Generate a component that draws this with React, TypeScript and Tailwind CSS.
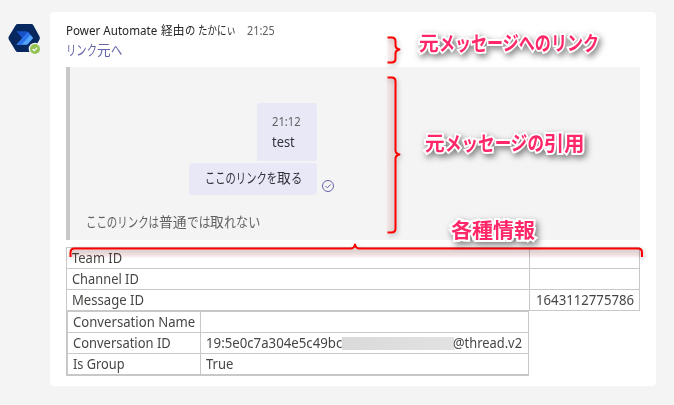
import { useLayoutEffect, useRef, useState } from "react";

const base = "font-['Noto_Sans','Noto_Sans_CJK_JP',sans-serif]";

/** One line of text condensed horizontally to an exact width. */
function Fit({ w, children, className = "" }: { w: number; children: string; className?: string }) {
  const ref = useRef<HTMLSpanElement>(null);
  const [scale, setScale] = useState(1);
  useLayoutEffect(() => {
    if (ref.current) setScale(w / ref.current.offsetWidth);
  }, [w]);
  return (
    <span className={`block shrink-0 whitespace-nowrap ${className}`} style={{ width: w }}>
      <span ref={ref} className="inline-block origin-left" style={{ transform: `scaleX(${scale})` }}>
        {children}
      </span>
    </span>
  );
}

/** Japanese line made of runs: full-width kanji and narrower kana. */
function Runs({ runs, className = "" }: { runs: [string, number][]; className?: string }) {
  return (
    <div className={`flex ${className}`}>
      {runs.map(([text, w], i) => (
        <Fit key={i} w={w}>{text}</Fit>
      ))}
    </div>
  );
}

function Avatar() {
  return (
    <svg className="h-8 w-9 shrink-0" viewBox="0 0 36 32">
      <path d="M9.6 2h13.8q1.2 0 1.800 1l6.300 11.500q.8 1.500 0 3L25.200 29q-.6 1-1.800 1H9.600q-1.200 0-1.800-1L.8 17.500q-.8-1.500 0-3L7.800 3q.6-1 1.800-1z" fill="#06285f" />
      <path d="M8.500 9.300h9.700q1 0 1.700.8l5.200 5.900H14z" fill="#1850c8" />
      <path d="M14 16 8.500 22.500h5L19 16z" fill="#123f9f" />
      <path d="M20 10.200 25.200 16 20 22q-.6.700-1.400.700H8.600z" fill="#55a5fb" />
      <path d="M20 10.200 22.400 12.900 13.600 22.700h-5z" fill="#2b73ea" />
      <circle cx="27" cy="27" r="6.300" fill="#f4f4f4" />
      <circle cx="27" cy="27" r="5" fill="#92c353" />
      <path d="m24.700 27 1.600 1.600 3-3" fill="none" stroke="#fff" strokeWidth="1.200" />
    </svg>
  );
}

function Brace({ d, shade }: { d: string; shade: string }) {
  return (
    <g>
      <path d={shade} fill="#a00000" opacity=".09" filter="url(#edge)" />
      <path d={d} fill="none" stroke="#000" strokeWidth="3" opacity=".2" filter="url(#soft)" transform="translate(1 2)" />
      <path d={d} fill="none" stroke="#f00" strokeWidth="2" strokeLinejoin="round" />
    </g>
  );
}

function Note({ runs, className }: { runs: [string, number][]; className: string }) {
  return (
    <Runs
      runs={runs}
      className={`absolute text-[20px] leading-6 font-bold text-[#ff2768] [paint-order:stroke_fill] [-webkit-text-stroke:4px_white] drop-shadow-[2px_3px_3px_rgba(0,0,0,0.5)] ${className}`}
    />
  );
}

const ids: [string, number, string][] = [
  ["Team ID", 50, ""],
  ["Channel ID", 67, ""],
  ["Message ID", 72, "1643112775786"],
];

export default function App() {
  return (
    <div className={`relative flex h-[405px] w-[674px] overflow-hidden bg-[#f4f4f4] pt-3 pl-2 text-[#484644] ${base}`}>
      <div className="w-[42px] shrink-0 pt-2.5">
        <Avatar />
      </div>
      <main className="h-[374px] w-[606px] rounded bg-white px-4 pt-2.5">
        <div className="flex h-[18px] text-[12px] leading-[18px]">
          <Fit w={91} className="text-[#252423]">Power Automate</Fit>
          <Runs runs={[["経由", 23.6], ["の", 10.4]]} className="ml-1 text-[#252423]" />
          <Fit w={38} className="ml-[3px] text-[#252423]">たかにぃ</Fit>
          <Fit w={28} className="ml-[11px] text-[#616161]">21:25</Fit>
        </div>
        <Runs
          runs={[["リンク", 31], ["元", 13.7], ["へ", 11.3]]}
          className="h-[27px] text-[14px] leading-5 text-[#6264a7]"
        />

        <blockquote className="h-[173px] border-l-4 border-[#c8c8c8] bg-[#f4f4f4] pt-9 pl-4">
          <div className="flex h-[92px] w-[264px] items-end">
            <div className="ml-[103px] flex w-32 shrink-0 flex-col items-end gap-[2px]">
              <div className="h-[58px] w-[60px] rounded-t-[3px] bg-[#e9e8f6] pt-[9px] pl-[15px]">
                <Fit w={29} className="text-[12px] leading-5 text-[#616161]">21:12</Fit>
                <Fit w={23} className="text-[14px] leading-5 text-[#33323a]">test</Fit>
              </div>
              <div className="h-8 w-32 rounded-[3px] bg-[#e9e8f6] pt-[5px] pl-4">
                <Runs
                  runs={[["ここのリンクを", 72], ["取", 13.7], ["る", 11.3]]}
                  className="text-[14px] leading-5 text-[#33323a]"
                />
              </div>
            </div>
            <svg className="mb-0.5 ml-1 size-3.5 shrink-0" viewBox="0 0 14 14" fill="none" stroke="#6264a7">
              <circle cx="7" cy="7" r="5.500" />
              <path d="m4.500 7 1.800 1.800L9.700 5.500" />
            </svg>
          </div>
          <Runs
            runs={[["ここのリンクは", 73], ["普通", 27.6], ["では", 23.4], ["取", 13.7], ["れない", 36.3]]}
            className="mt-[17px] text-[14px] leading-5 text-[#616161]"
          />
        </blockquote>

        <div className="mt-[7px] w-[574px] border-t border-l border-[#c8c8c8] text-[14px] leading-5">
          {ids.map(([label, w, value]) => (
            <div key={label} className="flex h-[21px]">
              <div className="w-[463px] border-r border-b border-[#c8c8c8] pl-[5px]">
                <Fit w={w}>{label}</Fit>
              </div>
              <div className="w-[110px] border-r border-b border-[#c8c8c8] pl-1.5">
                {value && <Fit w={98}>{value}</Fit>}
              </div>
            </div>
          ))}
        </div>
        <div className="w-[463px] border-t border-b border-l-2 border-[#c8c8c8] text-[14px] leading-5">
          <div className="flex h-[21px]">
            <div className="w-[133px] border-r border-b border-[#c8c8c8] pl-[5px]"><Fit w={122}>Conversation Name</Fit></div>
            <div className="flex-1 border-r border-b border-[#c8c8c8]" />
          </div>
          <div className="flex h-[21px]">
            <div className="w-[133px] border-r border-b border-[#c8c8c8] pl-[5px]"><Fit w={98}>Conversation ID</Fit></div>
            <div className="flex flex-1 border-r border-b border-[#c8c8c8] pl-[5px]">
              <Fit w={136}>19:5e0c7a304e5c49bc</Fit>
              <div className="mt-1 h-[13px] w-28 shrink-0 bg-linear-to-r from-[#dadada] to-[#e2e2e2]" />
              <Fit w={69} className="-ml-px">@thread.v2</Fit>
            </div>
          </div>
          <div className="flex h-[21px]">
            <div className="w-[133px] border-r border-b border-[#c8c8c8] pl-[5px]"><Fit w={52}>Is Group</Fit></div>
            <div className="flex-1 border-r border-b border-[#c8c8c8] pl-[5px]"><Fit w={27}>True</Fit></div>
          </div>
        </div>
      </main>

      <svg className="absolute inset-0" width="674" height="405" viewBox="0 0 674 405">
        <defs>
          <filter id="soft" filterUnits="userSpaceOnUse" x="0" y="0" width="674" height="405">
            <feGaussianBlur stdDeviation="2.500" />
          </filter>
          <filter id="edge" filterUnits="userSpaceOnUse" x="0" y="0" width="674" height="405">
            <feGaussianBlur stdDeviation="1" />
          </filter>
        </defs>
        <Brace d="M387.500 37.500h4q4 0 4 4v4q0 3 4 4q-4 1-4 4v5q0 4-4 4h-4" shade="M387.500 38h8v25h-8z" />
        <Brace d="M387.500 77.500h4q4 0 4 4v69q0 3 4 4q-4 1-4 4v70q0 4-4 4h-4" shade="M387.500 78h8v154h-8z" />
        <Brace d="M70.500 257v-4.500q0-4 4-4H351q3 0 4-4q1 4 4 4H638q4 0 4 4v4.500" shade="M71 249h571v8H71z" />
      </svg>
      <Note runs={[["元", 19.7], ["メッセージへのリンク", 160.3]]} className="top-8 left-[419px]" />
      <Note runs={[["元", 19.7], ["メッセージの", 99.3], ["引用", 40.3]]} className="top-[132px] left-[425px]" />
      <Note runs={[["各種情報", 84]]} className="top-[219px] left-[451px]" />
    </div>
  );
}
